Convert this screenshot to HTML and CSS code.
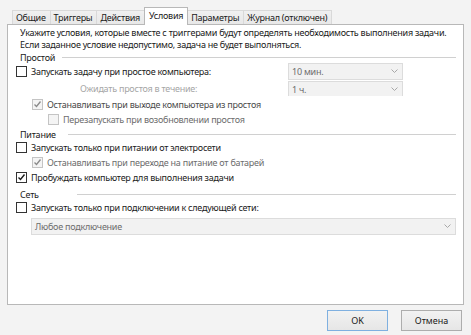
FILE: index.html
```html
<!DOCTYPE html>
<html lang="ru">
<head>
<meta charset="utf-8">
<title>Условия</title>
<link rel="stylesheet" href="styles.css">
</head>
<body>
<div class="dialog">
  <div class="tabs">
    <div class="tab">Общие</div>
    <div class="tab">Триггеры</div>
    <div class="tab">Действия</div>
    <div class="tab active">Условия</div>
    <div class="tab">Параметры</div>
    <div class="tab">Журнал (отключен)</div>
  </div>
  <div class="pane">
    <p class="intro">Укажите условия, которые вместе с триггерами будут определять необходимость выполнения задачи.<br>Если заданное условие недопустимо, задача не будет выполняться.</p>

    <div class="group g-idle"><span class="group-label">Простой</span><span class="group-line"></span></div>
    <div class="row row-combo">
      <label class="check"><span class="box"></span><span>Запускать задачу при простое компьютера:</span></label>
      <div class="combo"><span>10 мин.</span><svg class="chev" width="7" height="5" viewBox="0 0 7 5"><path d="M0.5 0.5 L3.5 3.5 L6.5 0.5" fill="none" stroke="#a8a8a8" stroke-width="1"/></svg></div>
    </div>
    <div class="row row-combo row-wait">
      <span class="wait-label">Ожидать простоя в течение:</span>
      <div class="combo clipped"><span>1 ч.</span><svg class="chev" width="7" height="5" viewBox="0 0 7 5"><path d="M0.5 0.5 L3.5 3.5 L6.5 0.5" fill="none" stroke="#a8a8a8" stroke-width="1"/></svg></div>
    </div>
    <div class="row lvl1">
      <label class="check dim1"><span class="box disabled"><svg width="9" height="9" viewBox="0 0 9 9"><path d="M1.5 4.5 L3.5 6.5 L7.5 1.5" fill="none" stroke="#8a8a8a" stroke-width="1.3"/></svg></span><span>Останавливать при выходе компьютера из простоя</span></label>
    </div>
    <div class="row lvl2 short">
      <label class="check dim2"><span class="box disabled"></span><span>Перезапускать при возобновлении простоя</span></label>
    </div>

    <div class="group g-power"><span class="group-label">Питание</span><span class="group-line"></span></div>
    <div class="row short">
      <label class="check"><span class="box"></span><span>Запускать только при питании от электросети</span></label>
    </div>
    <div class="row lvl1 short">
      <label class="check dim2"><span class="box disabled"><svg width="9" height="9" viewBox="0 0 9 9"><path d="M1.5 4.5 L3.5 6.5 L7.5 1.5" fill="none" stroke="#8a8a8a" stroke-width="1.3"/></svg></span><span>Останавливать при переходе на питание от батарей</span></label>
    </div>
    <div class="row short">
      <label class="check"><span class="box"><svg width="9" height="9" viewBox="0 0 9 9"><path d="M1.5 4.5 L3.5 6.5 L7.5 1.5" fill="none" stroke="#1a1a1a" stroke-width="1.4"/></svg></span><span>Пробуждать компьютер для выполнения задачи</span></label>
    </div>

    <div class="group g-net"><span class="group-label">Сеть</span><span class="group-line"></span></div>
    <div class="row short">
      <label class="check"><span class="box"></span><span>Запускать только при подключении к следующей сети:</span></label>
    </div>
    <div class="combo wide"><span>Любое подключение</span><svg class="chev" width="7" height="5" viewBox="0 0 7 5"><path d="M0.5 0.5 L3.5 3.5 L6.5 0.5" fill="none" stroke="#a8a8a8" stroke-width="1"/></svg></div>
  </div>
  <div class="buttons">
    <button class="btn default">OK</button>
    <button class="btn">Отмена</button>
  </div>
</div>
</body>
</html>
```
FILE: styles.css
```css
* { box-sizing: border-box; }
html, body { margin: 0; padding: 0; }
body {
  background: #f3f3f3;
  font-family: "Noto Sans", "Open Sans", sans-serif;
  font-size: 9px;
  letter-spacing: -0.25px;
  color: #1a1a1a;
}
.dialog {
  width: 471px;
  height: 335px;
  display: flex;
  flex-direction: column;
  padding: 7px 7px 0 7px;
}
.tabs {
  display: flex;
  align-items: flex-end;
  height: 18px;
  padding-left: 5px;
}
.tab {
  height: 15px;
  line-height: 13px;
  padding: 0 4px 0 3px;
  border: 1px solid #d9d9d9;
  border-left: none;
  background: linear-gradient(#f0f0f0, #e8e8e8);
  white-space: nowrap;
}
.tab:first-child { border-left: 1px solid #d9d9d9; }
.tab.active {
  height: 18px;
  line-height: 15px;
  background: #fff;
  border: 1px solid #b8b8b8;
  border-bottom: none;
  position: relative;
  z-index: 1;
  margin-left: -1px;
  padding: 0 4px;
}
.pane {
  flex: 1;
  margin-top: -1px;
  background: #fff;
  border: 1px solid #b8b8b8;
  padding: 2px 7px 0 8px;
  display: flex;
  flex-direction: column;
}
.intro {
  margin: 0 0 0 4px;
  line-height: 12px;
  white-space: nowrap;
}
.group {
  display: flex;
  align-items: center;
  height: 12px;
  padding-left: 4px;
}
.group-line {
  flex: 1;
  height: 1px;
  background: #d0d0d0;
}
.g-idle .group-label { width: 42px; }
.g-power { margin-top: 1px; }
.g-power .group-label { width: 48px; }
.g-net { margin-top: 3px; }
.g-net .group-label { width: 57px; }
.row {
  display: flex;
  align-items: center;
  height: 16px;
}
.row.short { height: 15px; }
.row-combo {
  display: grid;
  grid-template-columns: 272px 115px;
  height: 17px;
}
.row-wait { height: 16px; }
.wait-label {
  padding-left: 64px;
  color: #a6a6a6;
}
.lvl1 { padding-left: 16px; }
.lvl2 { padding-left: 32px; }
.check {
  display: flex;
  align-items: center;
  gap: 4px;
  white-space: nowrap;
}
.box {
  width: 11px;
  height: 11px;
  border: 1px solid #333;
  background: #fff;
  display: flex;
  align-items: center;
  justify-content: center;
}
.box.disabled {
  border-color: #c4c4c4;
  background: #f4f4f4;
}
.dim1 { color: #4a4a4a; }
.dim2 { color: #6d6d6d; }
.combo {
  height: 17px;
  border: 1px solid #dcdcdc;
  background: #f2f2f2;
  color: #6d6d6d;
  display: flex;
  align-items: center;
  justify-content: space-between;
  padding: 0 4px 0 3px;
}
.combo.clipped {
  height: 15px;
  border-bottom: none;
  margin-top: 1px;
  align-self: start;
}
.combo.wide {
  margin: 3px 0 0 15px;
}
.chev { flex: none; }
.buttons {
  display: flex;
  justify-content: flex-end;
  gap: 13px;
  padding: 5px 2px 4px 0;
}
.btn {
  width: 61px;
  height: 21px;
  font: inherit;
  color: #1a1a1a;
  border: 1px solid #adadad;
  background: linear-gradient(#f2f2f2, #e6e6e6);
  padding: 0;
}
.btn.default {
  border-color: #7fb0e0;
}
```
